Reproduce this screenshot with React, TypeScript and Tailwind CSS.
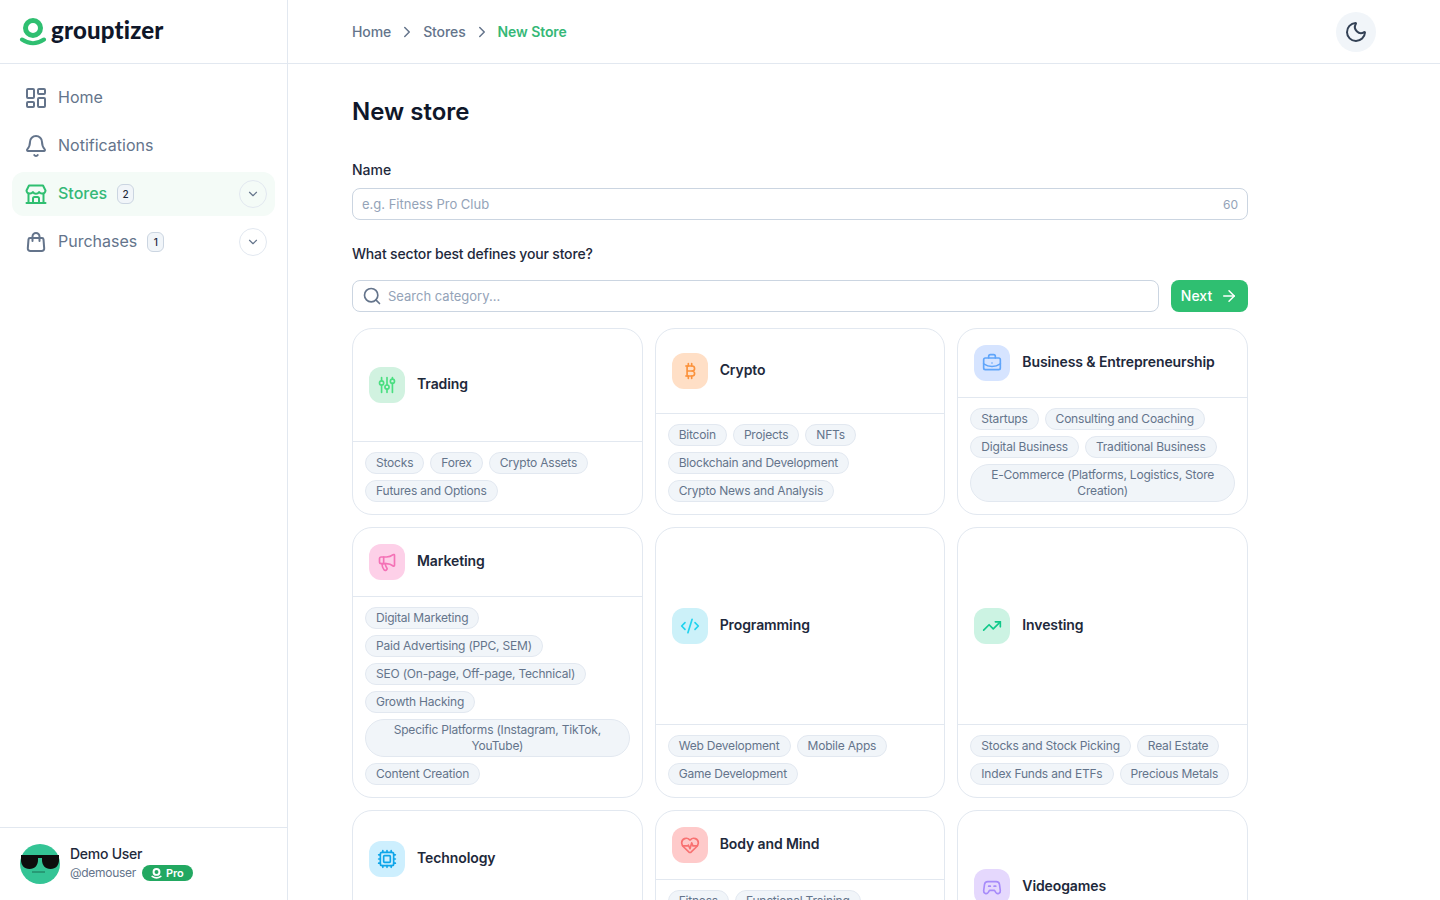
import {
  ArrowRight,
  Bell,
  BriefcaseBusiness,
  ChevronDown,
  ChevronRight,
  CodeXml,
  Cpu,
  HeartPulse,
  LayoutDashboard,
  Megaphone,
  Moon,
  Search,
  TrendingUp,
} from "lucide-react";
import type { ComponentType, SVGProps } from "react";

type IconProps = { size?: number; strokeWidth?: number; className?: string };
type IconType = ComponentType<IconProps>;

const stroke = (size = 24, strokeWidth = 2): SVGProps<SVGSVGElement> => ({
  width: size,
  height: size,
  viewBox: "0 0 24 24",
  fill: "none",
  stroke: "currentColor",
  strokeWidth,
  strokeLinecap: "round",
  strokeLinejoin: "round",
});

const StoreIcon = ({ size, strokeWidth, className }: IconProps) => (
  <svg {...stroke(size, strokeWidth)} className={className}>
    <path d="M2.500 21h19" />
    <path d="M4.500 21V11.500M19.500 21V11.500" />
    <path d="M5 3.500h14l2.500 5a3 3 0 0 1-3.200 3 3.300 3.300 0 0 1-3.200-1.500 3.600 3.600 0 0 1-6.200 0 3.300 3.300 0 0 1-3.200 1.500 3 3 0 0 1-3.200-3z" />
    <path d="M9 21v-4.500a1.500 1.500 0 0 1 1.500-1.500h3a1.500 1.500 0 0 1 1.500 1.500V21" />
  </svg>
);

const BagIcon = ({ size, strokeWidth, className }: IconProps) => (
  <svg {...stroke(size, strokeWidth)} className={className}>
    <path d="M6 8h12a1.500 1.500 0 0 1 1.500 1.400l.7 8.900a2.500 2.500 0 0 1-2.500 2.700H6.300a2.500 2.500 0 0 1-2.500-2.700l.7-8.900A1.500 1.500 0 0 1 6 8z" />
    <path d="M8.500 11V6.500a3.500 3.500 0 0 1 7 0V11" />
  </svg>
);

const SlidersIcon = ({ size, strokeWidth, className }: IconProps) => (
  <svg {...stroke(size, strokeWidth)} className={className}>
    <path d="M5.500 3v4M5.500 12v9M12 3v9M12 17v4M18.500 3v2M18.500 10v11" />
    <circle cx="5.500" cy="9.500" r="2.500" />
    <circle cx="12" cy="14.500" r="2.500" />
    <circle cx="18.500" cy="7.500" r="2.500" />
  </svg>
);

const BitcoinIcon = ({ size, strokeWidth, className }: IconProps) => (
  <svg {...stroke(size, strokeWidth)} className={className}>
    <path d="M7 6h7.500a3 3 0 0 1 0 6 3 3 0 0 1 0 6H7" />
    <path d="M8.500 6v12M8.500 12h6M10 3v3M14 3v3M10 18v3M14 18v3" />
  </svg>
);

const GamepadIcon = ({ size, strokeWidth, className }: IconProps) => (
  <svg {...stroke(size, strokeWidth)} className={className}>
    <path d="M7 5.500h10a4 4 0 0 1 4 3.500l1 7.500a3 3 0 0 1-5.500 2L15 16H9l-1.500 2.500a3 3 0 0 1-5.500-2L3 9a4 4 0 0 1 4-3.500z" />
    <path d="M8 11h2M14.500 11h2" />
  </svg>
);

const Logo = ({ className }: { className: string }) => (
  <svg viewBox="0 0 28 28" fill="none" className={className}>
    <circle cx="14" cy="10" r="7.500" stroke="currentColor" strokeWidth="5" />
    <path d="M3 21.500Q14 29 25 21.500" stroke="currentColor" strokeWidth="4" strokeLinecap="round" />
  </svg>
);

const Avatar = () => (
  <svg viewBox="0 0 40 40" className="h-10 w-10 shrink-0">
    <circle cx="20" cy="20" r="20" fill="#34c495" />
    <path d="M1 11h17v5c0 5-3 9-8.500 9S1 21 1 16z" fill="#0d0d0d" />
    <path d="M22 11h17v5c0 5-3 9-8.500 9S22 21 22 16z" fill="#0d0d0d" />
    <path d="M17 11h6v3h-6z" fill="#0d0d0d" />
    <path d="M12 28h13" stroke="#1f7f60" strokeWidth="1.200" />
  </svg>
);

type NavItem = {
  label: string;
  icon: IconType;
  badge?: string;
  active?: boolean;
  expandable?: boolean;
};

const navItems: NavItem[] = [
  { label: "Home", icon: LayoutDashboard },
  { label: "Notifications", icon: Bell },
  { label: "Stores", icon: StoreIcon, badge: "2", active: true, expandable: true },
  { label: "Purchases", icon: BagIcon, badge: "1", expandable: true },
];

type Category = {
  title: string;
  icon: IconType;
  tileClass: string;
  iconClass: string;
  chips: string[];
};

const categories: Category[] = [
  {
    title: "Trading",
    icon: SlidersIcon,
    tileClass: "bg-[#d1f2e0]",
    iconClass: "text-[#4ade80]",
    chips: ["Stocks", "Forex", "Crypto Assets", "Futures and Options"],
  },
  {
    title: "Crypto",
    icon: BitcoinIcon,
    tileClass: "bg-[#ffdfc6]",
    iconClass: "text-[#fb923c]",
    chips: ["Bitcoin", "Projects", "NFTs", "Blockchain and Development", "Crypto News and Analysis"],
  },
  {
    title: "Business & Entrepreneurship",
    icon: BriefcaseBusiness,
    tileClass: "bg-[#d6e4ff]",
    iconClass: "text-[#60a5fa]",
    chips: [
      "Startups",
      "Consulting and Coaching",
      "Digital Business",
      "Traditional Business",
      "E-Commerce (Platforms, Logistics, Store Creation)",
    ],
  },
  {
    title: "Marketing",
    icon: Megaphone,
    tileClass: "bg-[#fdd0e8]",
    iconClass: "text-[#f472b6]",
    chips: [
      "Digital Marketing",
      "Paid Advertising (PPC, SEM)",
      "SEO (On-page, Off-page, Technical)",
      "Growth Hacking",
      "Specific Platforms (Instagram, TikTok, YouTube)",
      "Content Creation",
    ],
  },
  {
    title: "Programming",
    icon: CodeXml,
    tileClass: "bg-[#ccf1f9]",
    iconClass: "text-[#22d3ee]",
    chips: ["Web Development", "Mobile Apps", "Game Development"],
  },
  {
    title: "Investing",
    icon: TrendingUp,
    tileClass: "bg-[#ccf3e3]",
    iconClass: "text-[#10c98a]",
    chips: ["Stocks and Stock Picking", "Real Estate", "Index Funds and ETFs", "Precious Metals"],
  },
  {
    title: "Technology",
    icon: Cpu,
    tileClass: "bg-[#cdeffe]",
    iconClass: "text-[#0ea5e9]",
    chips: ["Artificial Intelligence", "Software", "Cybersecurity and Privacy", "Hardware", "Gadgets and Reviews"],
  },
  {
    title: "Body and Mind",
    icon: HeartPulse,
    tileClass: "bg-[#fecaca]",
    iconClass: "text-[#f87171]",
    chips: [
      "Fitness",
      "Functional Training",
      "Nutrition and Supplements",
      "Meditation and Mindfulness",
      "Yoga",
      "Mental Health",
      "Personal Development",
    ],
  },
  {
    title: "Videogames",
    icon: GamepadIcon,
    tileClass: "bg-[#e5d8fd]",
    iconClass: "text-[#a78bfa]",
    chips: ["Esports", "Streaming"],
  },
];

const Sidebar = () => (
  <aside className="flex h-screen w-[288px] shrink-0 flex-col border-r border-[#e2e8f0] bg-white">
    <div className="flex h-16 shrink-0 items-center gap-[4px] border-b border-[#e2e8f0] pl-[19px]">
      <Logo className="h-7 w-7 text-[#2fbf71]" />
      <span className="-mt-1 font-['Lato'] text-[24px] font-black leading-none tracking-[0.2px] text-[#0f172a]">
        grouptizer
      </span>
    </div>
    <nav className="flex flex-1 flex-col gap-1 px-3 pt-3">
      {navItems.map((item) => (
        <div
          key={item.label}
          className={`flex h-11 items-center rounded-xl pl-3 pr-2 ${item.active ? "bg-[#f4fbf7]" : ""}`}
        >
          <item.icon
            size={24}
            strokeWidth={2}
            className={item.active ? "text-[#2fbf71]" : "text-[#64748b]"}
          />
          <span
            className={`ml-[10px] pb-[2px] text-base ${item.active ? "font-medium text-[#35b877]" : "text-[#64748b]"}`}
          >
            {item.label}
          </span>
          {item.badge && (
            <span className="ml-[10px] flex h-5 w-[17px] items-center justify-center rounded-md border border-[#cbd5e1] bg-[#f1f5f9] text-[10px] font-medium text-[#1e293b]">
              {item.badge}
            </span>
          )}
          {item.expandable && (
            <span className="ml-auto flex h-7 w-7 items-center justify-center rounded-full border border-[#e2e8f0]">
              <ChevronDown size={14} className="text-[#64748b]" />
            </span>
          )}
        </div>
      ))}
    </nav>
    <div className="flex h-[73px] shrink-0 items-center gap-[10px] border-t border-[#e2e8f0] px-5">
      <Avatar />
      <div className="flex flex-col gap-px pb-[3px]">
        <span className="text-sm font-medium leading-5 tracking-[-0.25px] text-[#1e293b]">Demo User</span>
        <div className="flex items-center gap-[6px]">
          <span className="text-xs leading-4 tracking-[-0.3px] text-[#64748b]">@demouser</span>
          <span className="flex h-4 items-center gap-1 rounded-full bg-[#22a861] px-[9px] text-[11px] font-semibold text-white">
            <Logo className="h-[11px] w-[11px] text-white" />
            Pro
          </span>
        </div>
      </div>
    </div>
  </aside>
);

const Topbar = () => (
  <header className="flex h-16 shrink-0 items-center justify-between border-b border-[#e2e8f0] px-16">
    <div className="flex items-center gap-[7px] text-sm font-medium tracking-[-0.1px] text-[#64748b]">
      <span>Home</span>
      <ChevronRight size={18} />
      <span>Stores</span>
      <ChevronRight size={18} />
      <span className="font-semibold text-[#35b877]">New Store</span>
    </div>
    <button className="flex h-10 w-10 items-center justify-center rounded-full bg-[#f1f5f9]">
      <Moon size={24} strokeWidth={2} className="text-[#334155]" />
    </button>
  </header>
);

const CategoryCard = ({ category }: { category: Category }) => (
  <div className="flex flex-col overflow-hidden rounded-[20px] border border-[#e2e8f0] bg-white">
    <div className="flex min-h-[68px] flex-1 items-center gap-3 px-4 py-4">
      <span className={`flex h-9 w-9 shrink-0 items-center justify-center rounded-xl ${category.tileClass}`}>
        <category.icon size={20} strokeWidth={2} className={category.iconClass} />
      </span>
      <span className="pb-[2px] text-sm font-semibold tracking-[-0.1px] text-[#1e293b]">{category.title}</span>
    </div>
    <div className="flex flex-wrap gap-[6px] border-t border-[#e2e8f0] px-3 pb-3 pt-[10px]">
      {category.chips.map((chip) => (
        <span
          key={chip}
          className="rounded-full border border-[#e2e8f0] bg-[#f1f5f9] px-[10px] py-0.5 text-center text-xs leading-4 tracking-[-0.2px] text-[#64748b]"
        >
          {chip}
        </span>
      ))}
    </div>
  </div>
);

export default function App() {
  return (
    <div className="flex h-screen overflow-hidden bg-white font-['Inter',sans-serif]">
      <Sidebar />
      <main className="flex h-screen flex-1 flex-col overflow-hidden">
        <Topbar />
        <div className="flex-1 overflow-hidden pl-16 pt-8">
          <div className="w-[896px]">
            <h1 className="text-2xl font-semibold leading-8 text-[#0f172a]">New store</h1>
            <label className="mt-8 block text-sm font-medium leading-5 text-[#1e293b]">Name</label>
            <div className="mt-2 flex h-8 items-center justify-between rounded-lg border border-[#cbd5e1] px-[9px] pt-px text-[13px] text-[#94a3b8]">
              <span>e.g. Fitness Pro Club</span>
              <span className="text-xs">60</span>
            </div>
            <p className="mt-6 text-sm font-medium leading-5 tracking-[-0.17px] text-[#1e293b]">
              What sector best defines your store?
            </p>
            <div className="mt-4 flex gap-3">
              <div className="flex h-8 flex-1 items-center gap-[6px] rounded-lg border border-[#cbd5e1] px-[9px] text-[13px] text-[#94a3b8]">
                <Search size={20} className="text-[#64748b]" />
                <span className="pt-px">Search category...</span>
              </div>
              <button className="flex h-8 w-[77px] items-center justify-center gap-2 rounded-lg bg-[#2fbf71] text-sm font-medium text-white">
                Next
                <ArrowRight size={18} />
              </button>
            </div>
            <div className="mt-4 grid grid-cols-3 gap-3">
              {categories.map((category) => (
                <CategoryCard key={category.title} category={category} />
              ))}
            </div>
          </div>
        </div>
      </main>
    </div>
  );
}
